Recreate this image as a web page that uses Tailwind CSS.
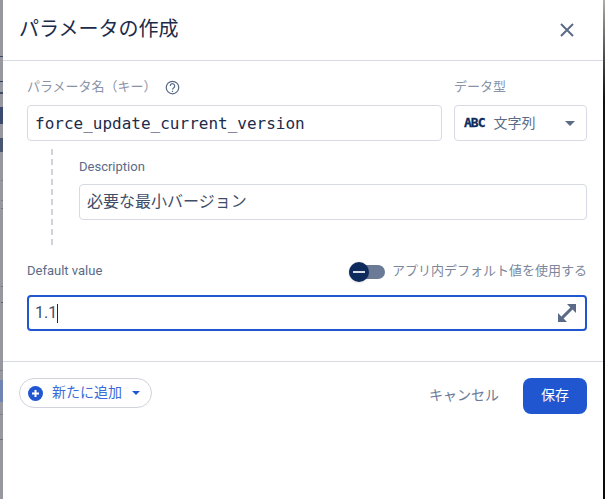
<!DOCTYPE html>
<html lang="en">
<head>
    <meta charset="UTF-8">
    <title>パラメータの作成</title>
    <script src="https://cdn.jsdelivr.net/npm/@tailwindcss/browser@4"></script>
</head>
<body class="w-[605px] h-[499px] overflow-hidden flex font-['Roboto','Noto_Sans_CJK_JP',sans-serif]">
    <!-- dimmed page behind the dialog -->
    <div class="relative w-[3px] h-[499px] shrink-0 bg-[#97989f]">
        <div class="absolute left-0 top-[56px] w-[3px] h-px bg-[#3c4a66]"></div>
        <div class="absolute left-0 top-[81px] w-[3px] h-px bg-[#2c3a58]"></div>
        <div class="absolute left-0 top-[92px] w-[3px] h-[2px] bg-[#3c4a66]"></div>
        <div class="absolute left-0 top-[107px] w-[3px] h-[17px] bg-[#3c4a70]"></div>
        <div class="absolute left-0 top-[138px] w-[3px] h-[14px] bg-[#4a5670]"></div>
        <div class="absolute left-[1px] top-[180px] w-[2px] h-px bg-[#7a7e8c]"></div>
        <div class="absolute left-[1px] top-[200px] w-[2px] h-px bg-[#7a7e8c]"></div>
        <div class="absolute left-[1px] top-[208px] w-[2px] h-px bg-[#6f7482]"></div>
        <div class="absolute left-[1px] top-[286px] w-[2px] h-px bg-[#6f7482]"></div>
        <div class="absolute left-[1px] top-[302px] w-[2px] h-px bg-[#5a6070]"></div>
        <div class="absolute left-0 top-[370px] w-[3px] h-px bg-[#7f828c]"></div>
        <div class="absolute left-0 top-[380px] w-[3px] h-[22px] bg-[#6f84b4]"></div>
        <div class="absolute left-0 top-[414px] w-[3px] h-px bg-[#7f828c]"></div>
        <div class="absolute left-0 top-[439px] w-[3px] h-px bg-[#6f727c]"></div>
    </div>

    <div class="w-[600px] h-[499px] shrink-0 bg-white flex flex-col">
        <header class="h-[61px] shrink-0 border-b border-[#d8dae3] pl-[16px] pr-[28px] flex items-center justify-between">
            <h1 class="pb-[2px] text-[20px] text-[#1c2b4a]">パラメータの作成</h1>
            <svg class="w-[16px] h-[16px]" viewBox="0 0 16 16" fill="none" stroke="#5b6b87" stroke-width="2"><path d="M2 2l12 12M14 2L2 14"/></svg>
        </header>

        <main class="h-[301px] shrink-0 border-b border-[#d8dae3] pl-[24px] pr-[16px] pt-[16px]">
            <div class="flex gap-[12px]">
                <div class="w-[415px]">
                    <div class="h-[20px] flex items-center text-[13px] text-[#8a94a8]">
                        パラメータ名（キー）
                        <svg class="w-[15px] h-[15px] ml-[8px]" viewBox="0 0 24 24" fill="none" stroke="#5b6b87" stroke-width="2"><circle cx="12" cy="12" r="10"/><path d="M8.500 9.500a3.500 3.500 0 1 1 5.500 2.800c-1.200.9-2 1.500-2 2.900M12 17v2"/></svg>
                    </div>
                    <div class="mt-[8px] h-[36px] border border-[#d8dae3] rounded-[4px] px-[7px] pt-[1px] flex items-center font-['DejaVu_Sans_Mono',monospace] text-[16px] text-[#1c2b4a]">force_update_current_version</div>
                </div>
                <div class="w-[133px]">
                    <div class="h-[20px] flex items-center text-[13px] text-[#8a94a8]">データ型</div>
                    <div class="mt-[8px] h-[36px] border border-[#d8dae3] rounded-[4px] pl-[9px] pr-[11px] flex items-center">
                        <span class="font-['DejaVu_Sans_Mono',monospace] font-bold text-[13px] tracking-[-1px] text-[#0f2a5c] [-webkit-text-stroke:0.3px_#0f2a5c]">ABC</span>
                        <span class="ml-[9px] text-[14px] text-[#5b6b87]">文字列</span>
                        <span class="ml-auto w-0 h-0 border-x-[5px] border-x-transparent border-t-[5px] border-t-[#5b6b87]"></span>
                    </div>
                </div>
            </div>

            <div class="flex h-[96px] mt-[8px]">
                <div class="ml-[24px] w-0 border-l-2 border-dashed border-[#d0d3dc]"></div>
                <div class="ml-[26px] flex-1">
                    <div class="mt-[8px] h-[20px] flex items-center text-[13px] text-[#5b6b87]">Description</div>
                    <div class="mt-[7px] h-[36px] border border-[#d8dae3] rounded-[4px] px-[7px] flex items-center text-[16px] text-[#3f4d68]">必要な最小バージョン</div>
                </div>
            </div>

            <div class="flex items-center justify-between h-[20px] mt-[16px]">
                <div class="text-[13px] text-[#5b6b87]">Default value</div>
                <div class="flex items-center">
                    <div class="relative mt-[2px] w-[36px] h-[14px] rounded-full bg-[#6b7a96]">
                        <div class="absolute left-0 top-[-3px] w-[20px] h-[20px] rounded-full bg-[#0f2a5c] shadow flex items-center justify-center">
                            <div class="w-[12px] h-[2px] bg-[#d9deea]"></div>
                        </div>
                    </div>
                    <span class="ml-[7px] text-[13px] text-[#7c879c]">アプリ内デフォルト値を使用する</span>
                </div>
            </div>

            <div class="mt-[14px] h-[36px] border-2 border-[#2057d0] rounded-[4px] pl-[6px] pr-[8px] flex items-center justify-between">
                <div class="flex items-center text-[16px] text-[#3f4d68]">1.1<span class="w-px h-[19px] bg-[#0f2a5c]"></span></div>
                <svg class="w-[20px] h-[20px]" viewBox="0 0 20 20" fill="#5b6b87"><path d="M10 1H19V10L15.600 6.600 6.600 15.600 10 19H1V10L4.400 13.400 13.400 4.400z"/></svg>
            </div>
        </main>

        <footer class="px-[16px] pt-[16px] flex items-start justify-between">
            <div class="h-[30px] rounded-full border border-[#d0d3dc] pl-[8px] pr-[11px] flex items-center">
                <svg class="w-[15px] h-[15px]" viewBox="0 0 15 15"><circle cx="7.500" cy="7.500" r="7.500" fill="#2057d0"/><path d="M7.500 4v7M4 7.500h7" stroke="#fff" stroke-width="2"/></svg>
                <span class="ml-[9px] pb-[1px] text-[14px] text-[#3a6bd6]">新たに追加</span>
                <span class="ml-[10px] w-0 h-0 border-x-[4px] border-x-transparent border-t-[4px] border-t-[#2057d0]"></span>
            </div>
            <div class="flex items-center">
                <button class="pb-[1px] text-[14px] text-[#6b7a96]">キャンセル</button>
                <button class="ml-[24px] w-[64px] h-[36px] pb-[1px] rounded-[8px] bg-[#2057d0] text-[14px] text-white">保存</button>
            </div>
        </footer>
    </div>

    <div class="w-[2px] h-[499px] shrink-0 bg-gradient-to-b from-[#b0aca6] via-[#111111] via-20% to-[#0a0a0a]"></div>
</body>
</html>
